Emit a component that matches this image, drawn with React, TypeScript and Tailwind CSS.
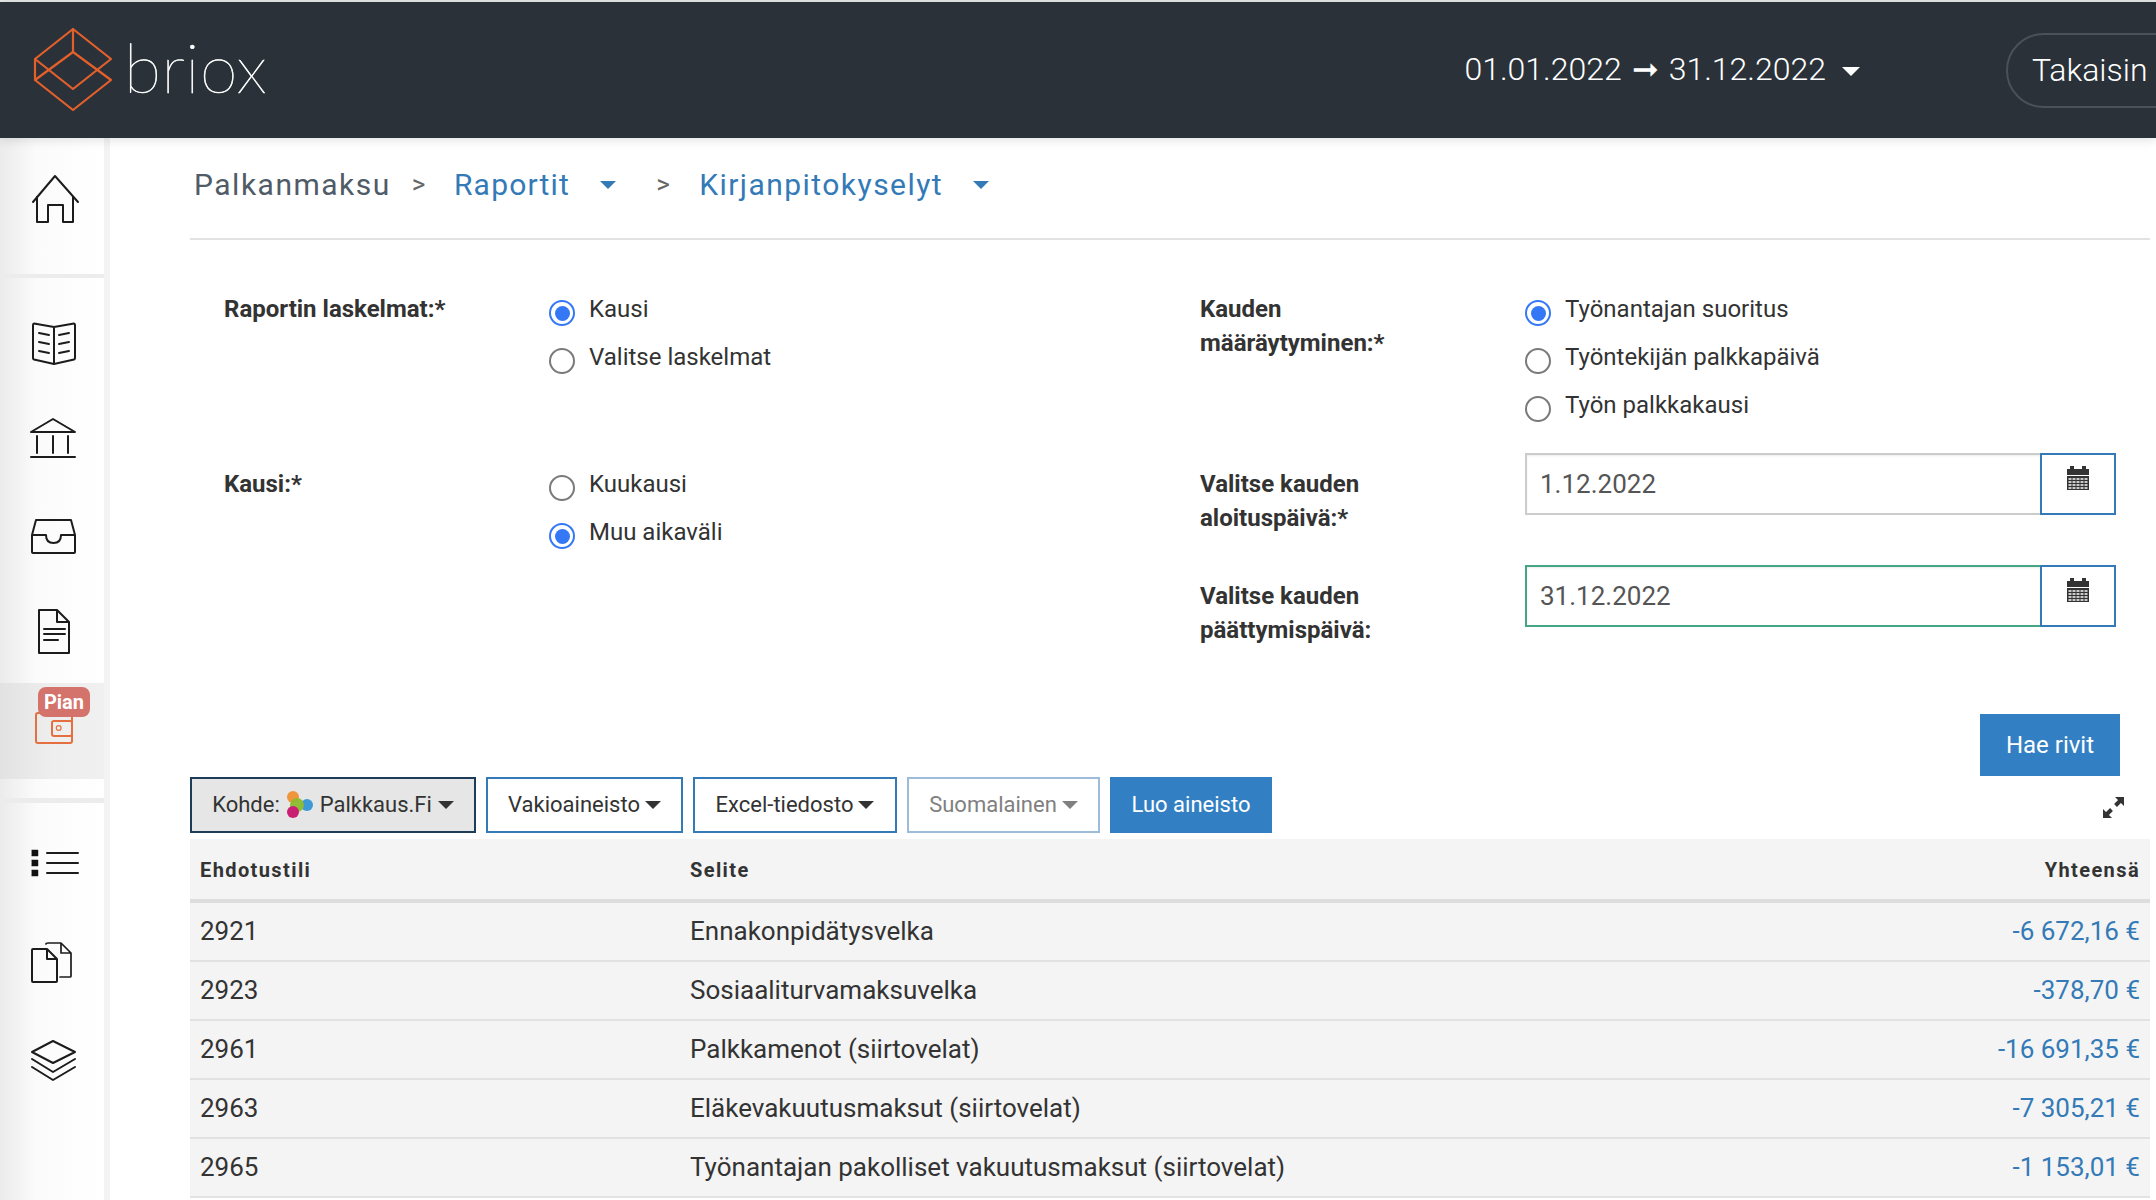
import React from 'react';

const Caret = ({ className }: { className: string }) => (
  <span className={`inline-block w-0 h-0 border-x-8 border-x-transparent border-t-8 ${className}`} />
);

const Icon = ({ children }: { children: React.ReactNode }) => (
  <svg viewBox="0 0 60 60" className="w-[60px] h-[60px]" fill="none" stroke="#1c1c1c" strokeWidth="2" strokeLinejoin="round" strokeLinecap="round">
    {children}
  </svg>
);

const Logo = () => (
  <svg viewBox="0 0 90 90" className="w-[90px] h-[90px]" fill="none" stroke="#e4602b" strokeWidth="2.2" strokeLinejoin="round" strokeLinecap="round">
    <path d="M7 34 L45 4 L83 34 L45 64 L7 34 L7 55 L45 85 L83 55 L45 27 L7 55" />
    <path d="M45 4 V27" />
  </svg>
);

const Radio = ({ label, checked }: { label: string; checked?: boolean }) => (
  <div className="flex h-12">
    <div className={`mt-2 w-[26px] h-[26px] rounded-full border-2 flex items-center justify-center shrink-0 bg-white ${checked ? 'border-[#3478f6]' : 'border-[#7a7a7a]'}`}>
      {checked && <div className="w-[15px] h-[15px] rounded-full bg-[#3478f6]" />}
    </div>
    <span className="ml-[14px] text-[24px] leading-[34px] text-[#333]">{label}</span>
  </div>
);

const Label = ({ children, className = '' }: { children: React.ReactNode; className?: string }) => (
  <div className={`w-[325px] shrink-0 text-[24px] leading-[34px] font-bold text-[#333] ${className}`}>{children}</div>
);

const CalendarIcon = () => (
  <svg viewBox="0 0 22 24" className="w-[22px] h-6">
    <rect x="0" y="3" width="22" height="6" fill="#333" />
    <rect x="3" y="0" width="4" height="4" fill="#333" />
    <rect x="15" y="0" width="4" height="4" fill="#333" />
    <rect x="0" y="10" width="22" height="14" fill="#333" />
    {[12, 15, 18, 21].map((y) =>
      [1.5, 5.5, 9.5, 13.5, 17.5].map((x) => <rect key={`${x}-${y}`} x={x} y={y} width="3" height="2" fill="#c9c9c9" />)
    )}
  </svg>
);

const DateField = ({ value, focused }: { value: string; focused?: boolean }) => (
  <div className="flex w-[591px] h-[62px]">
    <div className={`flex-1 flex items-center pl-[13px] text-[26px] text-[#555] border-2 border-r-0 shadow-[inset_0_1px_2px_rgba(0,0,0,0.08)] ${focused ? 'border-[#46a585]' : 'border-[#cccccc]'}`}>
      {value}
    </div>
    <div className="w-[76px] border-2 border-[#337ab7] flex justify-center pt-[11px]">
      <CalendarIcon />
    </div>
  </div>
);

const rows = [
  ['2921', 'Ennakonpidätysvelka', '-6 672,16 €'],
  ['2923', 'Sosiaaliturvamaksuvelka', '-378,70 €'],
  ['2961', 'Palkkamenot (siirtovelat)', '-16 691,35 €'],
  ['2963', 'Eläkevakuutusmaksut (siirtovelat)', '-7 305,21 €'],
  ['2965', 'Työnantajan pakolliset vakuutusmaksut (siirtovelat)', '-1 153,01 €'],
];

const ToolButton = ({ children, className = '' }: { children: React.ReactNode; className?: string }) => (
  <button className={`h-14 pb-px flex items-center justify-center border-2 text-[22px] ${className}`}>{children}</button>
);

const SideItem = ({ children, className = '' }: { children: React.ReactNode; className?: string }) => (
  <div className={`flex items-center justify-center ${className}`}>{children}</div>
);

export default function App() {
  return (
    <div className="w-[2156px] h-[1200px] overflow-hidden bg-white font-['Roboto',sans-serif] flex flex-col">
      <div className="h-0.5 bg-[#e4e5e6]" />
      {/* top bar */}
      <header className="h-[136px] bg-[#2a3139] flex items-center shrink-0 relative z-10 shadow-[0_2px_10px_rgba(0,0,0,0.12)]">
        <div className="ml-[28px]"><Logo /></div>
        <span className="ml-[6px] text-[68px] leading-none font-extralight text-white tracking-[0.5px] -translate-y-[3px] [-webkit-text-stroke:0.6px_white] font-['Lato',sans-serif]">briox</span>
        <div className="ml-auto flex items-center text-white text-[32px] font-light -translate-y-px">
          <span>01.01.2022</span>
          <span className="mx-[10px]">➞</span>
          <span>31.12.2022</span>
          <span className="ml-4 mt-1 inline-block w-0 h-0 border-x-[9px] border-x-transparent border-t-[9px] border-t-white" />
        </div>
        <div className="ml-[146px] h-[75px] w-[170px] -mr-[20px] pl-[24px] flex items-center rounded-l-full border-2 border-[#4a5159] text-white text-[32px] font-light">
          Takaisin
        </div>
      </header>

      <div className="flex flex-1 min-h-0">
        {/* sidebar */}
        <aside className="w-[110px] shrink-0 flex flex-col bg-gradient-to-r from-[#ebebeb] via-[#fbfbfb] via-35% to-white border-r-[6px] border-[#f3f3f3]">
          <SideItem className="h-[136px] pb-[14px]">
            <Icon>
              <path d="M11 33 L33 7 L56 33" />
              <path d="M15 28 V53 H26 V36 H41 V53 H51 V28" />
            </Icon>
          </SideItem>
          <div className="h-1 bg-[#ececec] mb-[17px]" />
          <SideItem className="h-24">
            <Icon>
              <path d="M32 14 L12 10.5 Q11 10.5 11 12 V45 Q11 46 12 46.5 L32 51 L52 46.5 Q53 46 53 45 V12 Q53 10.5 52 10.5 Z M32 14 V51" />
              <path d="M17 20 L27 22 M17 29 L27 31 M17 38 L27 40 M37 22 L47 20 M37 31 L47 29 M37 40 L47 38" />
            </Icon>
          </SideItem>
          <SideItem className="h-24">
            <Icon>
              <g transform="translate(0 -1)">
                <path d="M9 24 L31 11 L53 24 Z M15 28 V45 M31 28 V45 M46 28 V45 M9 49 H53" />
              </g>
            </Icon>
          </SideItem>
          <SideItem className="h-[98px]">
            <Icon>
              <g transform="translate(0 1)">
                <path d="M10 28 L14 13 H49 L53 28 V45 Q53 46 52 46 H11 Q10 46 10 45 Z M10 28 H24 Q24 36 31.5 36 Q39 36 39 28 H53" />
              </g>
            </Icon>
          </SideItem>
          <SideItem className="h-[98px]">
            <Icon>
              <g transform="translate(0 -2)">
                <path d="M17 8 H35 L47 20 V51 H17 Z M35 8 V20 H47 M22 27 H43 M22 32 H43 M22 38 H36" />
              </g>
            </Icon>
          </SideItem>
          <SideItem className="h-24 relative bg-gradient-to-r from-[#e2e2e2] via-[#eeeeee] to-[#f0f0f0]">
            <svg viewBox="0 0 60 60" className="w-[60px] h-[60px]" fill="none" stroke="#e4703f" strokeWidth="2" strokeLinejoin="round">
              <rect x="14" y="12" width="36" height="30" rx="2" />
              <rect x="30" y="20" width="20" height="15" rx="2" />
              <circle cx="36.7" cy="27" r="2.4" strokeWidth="1.2" />
            </svg>
            <span className="absolute left-[38px] top-[4px] w-[52px] h-[30px] rounded-lg bg-[#d4736b] text-white font-bold text-[20px] leading-[30px] text-center">Pian</span>
          </SideItem>
          <div className="h-[19px]" />
          <div className="h-[5px] bg-[#ececec] mb-[11px]" />
          <SideItem className="h-[98px]">
            <Icon>
              <rect x="10" y="17" width="6" height="6" fill="#111" strokeWidth="0.5" />
              <rect x="10" y="27" width="6" height="6" fill="#111" strokeWidth="0.5" />
              <rect x="10" y="37" width="6" height="6" fill="#111" strokeWidth="0.5" />
              <path d="M25 20 H56 M25 30 H56 M25 40 H56" />
            </Icon>
          </SideItem>
          <SideItem className="h-[98px] mt-0.5">
            <Icon>
              <path d="M10 17 Q10 16 11 16 H25 L35 26 V48 Q35 49 34 49 H11 Q10 49 10 48 Z M25 16 V26 H35" />
              <path d="M24 11 Q24 10 26 10 H39 L49 20 V43 Q49 44 48 44 H38 M39 10 V20 H49" strokeWidth="1.7" />
            </Icon>
          </SideItem>
          <SideItem className="h-[98px]">
            <Icon>
              <path d="M10 21 L31 10 L53 21 L31 32 Z" />
              <path d="M10 28 L31 41 L53 28 M10 36 L31 49 L53 36" />
            </Icon>
          </SideItem>
        </aside>

        <main className="flex-1 min-w-0 pl-[80px] pr-[6px] flex flex-col">
          {/* breadcrumb */}
          <div className="h-[102px] shrink-0 pb-[8px] flex items-center pl-[4px] border-b-2 border-[#e2e2e2] text-[30px] tracking-[1.5px]">
            <span className="text-[#4f5b66]">Palkanmaksu</span>
            <span className="ml-[21px] text-[26px] text-[#666]">&gt;</span>
            <span className="ml-[27px] text-[#337ab7] tracking-[1.2px]">Raportit</span>
            <Caret className="ml-[30px] mt-[2px] border-t-[#337ab7]" />
            <span className="ml-[40px] text-[26px] text-[#666]">&gt;</span>
            <span className="ml-[28px] text-[#337ab7] tracking-[1.45px]">Kirjanpitokyselyt</span>
            <Caret className="ml-[30px] mt-[2px] border-t-[#337ab7]" />
          </div>

          {/* form */}
          <div className="h-[474px] shrink-0 flex pl-[34px] pt-[52px]">
            <div className="w-[976px] shrink-0">
              <div className="flex h-[175px]">
                <Label>Raportin laskelmat:*</Label>
                <div><Radio label="Kausi" checked /><Radio label="Valitse laskelmat" /></div>
              </div>
              <div className="flex">
                <Label>Kausi:*</Label>
                <div><Radio label="Kuukausi" /><Radio label="Muu aikaväli" checked /></div>
              </div>
            </div>
            <div>
              <div className="flex h-[161px]">
                <Label>Kauden<br />määräytyminen:*</Label>
                <div>
                  <Radio label="Työnantajan suoritus" checked />
                  <Radio label="Työntekijän palkkapäivä" />
                  <Radio label="Työn palkkakausi" />
                </div>
              </div>
              <div className="flex h-28">
                <Label className="pt-[14px]">Valitse kauden<br />aloituspäivä:*</Label>
                <DateField value="1.12.2022" />
              </div>
              <div className="flex">
                <Label className="pt-[14px]">Valitse kauden<br />päättymispäivä:</Label>
                <DateField value="31.12.2022" focused />
              </div>
            </div>
          </div>

          <div className="flex justify-end pr-[30px] shrink-0">
            <button className="w-[140px] h-[62px] bg-[#337fc4] text-white text-[24px]">Hae rivit</button>
          </div>

          {/* toolbar */}
          <div className="mt-px h-14 flex gap-[10px] shrink-0 items-center">
            <ToolButton className="w-[286px] bg-[#e6e6e6] border-[#1d3c57] text-[#333] gap-[7px]">
              <span>Kohde:</span>
              <svg viewBox="0 0 26 27" className="w-[26px] h-[27px]">
                <circle cx="6" cy="6" r="6" fill="#f0953c" />
                <circle cx="20" cy="14" r="6" fill="#3d9ad6" />
                <circle cx="10" cy="14" r="7" fill="#8dbb2e" opacity="0.95" />
                <circle cx="6" cy="21" r="6" fill="#c81f73" />
              </svg>
              <span>Palkkaus.Fi</span>
              <Caret className="border-t-[#333] -ml-px" />
            </ToolButton>
            <ToolButton className="w-[197px] border-[#337ab7] text-[#333] gap-[5px]">Vakioaineisto<Caret className="border-t-[#333]" /></ToolButton>
            <ToolButton className="w-[204px] border-[#337ab7] text-[#333] gap-[5px]">Excel-tiedosto<Caret className="border-t-[#333]" /></ToolButton>
            <ToolButton className="w-[193px] border-[#9dbcd9] text-[#808080] gap-[5px]">Suomalainen<Caret className="border-t-[#808080]" /></ToolButton>
            <button className="w-[162px] h-14 pb-px bg-[#337fc4] text-white text-[22px]">Luo aineisto</button>
            <svg viewBox="0 0 21 21" className="ml-auto mr-[26px] w-[21px] h-[21px] translate-y-[2px]" fill="#333">
              <path d="M12 0 H21 V9 Z M0 12 V21 H9 Z" />
              <path d="M17 4 L12.5 8.5 M8.5 12.5 L4 17" stroke="#333" strokeWidth="4" />
            </svg>
          </div>

          {/* table */}
          <div className="mt-[6px] bg-[#f4f4f4] text-[#333]">
            <div className="h-[64px] flex items-center pt-px border-b-4 border-[#dddddd] text-[20px] font-bold tracking-[1.4px]">
              <span className="w-[500px] pl-[10px]">Ehdotustili</span>
              <span>Selite</span>
              <span className="ml-auto pr-[10px]">Yhteensä</span>
            </div>
            {rows.map((row) => (
              <div key={row[0]} className="h-[59px] flex items-center border-b-2 border-[#e2e2e2] text-[26px]">
                <span className="w-[500px] pl-[10px]">{row[0]}</span>
                <span>{row[1]}</span>
                <span className="ml-auto pr-[10px] text-[#337ab7]">{row[2]}</span>
              </div>
            ))}
          </div>
        </main>
      </div>
    </div>
  );
}
